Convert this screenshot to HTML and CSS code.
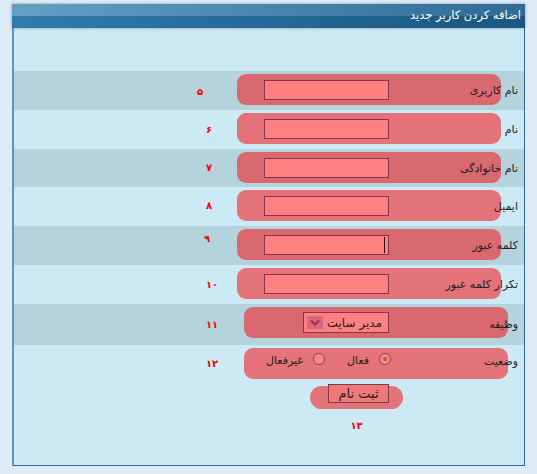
FILE: index.html
```html
<!DOCTYPE html>
<html lang="fa">
<head>
<meta charset="utf-8">
<title>اضافه کردن کاربر جدید</title>
<link rel="stylesheet" href="styles.css">
</head>
<body>
<div class="panel">
  <div class="head">اضافه کردن کاربر جدید</div>
  <div class="body">
    <div class="spacer"></div>

    <div class="row dark">
      <div class="label">نام کاربری</div>
      <div class="box"><input class="field" type="text"></div>
      <div class="num n5">۵</div>
    </div>

    <div class="row">
      <div class="label">نام</div>
      <div class="box"><input class="field" type="text"></div>
      <div class="num">۶</div>
    </div>

    <div class="row dark short">
      <div class="label">نام خانوادگی</div>
      <div class="box"><input class="field" type="text"></div>
      <div class="num">۷</div>
    </div>

    <div class="row">
      <div class="label">ایمیل</div>
      <div class="box"><input class="field" type="text"></div>
      <div class="num n8">۸</div>
    </div>

    <div class="row dark">
      <div class="label">کلمه عبور</div>
      <div class="box"><span class="caret-wrap"><input class="field field-plain" type="password"></span></div>
      <div class="num n9">۹</div>
    </div>

    <div class="row">
      <div class="label">تکرار کلمه عبور</div>
      <div class="box"><input class="field" type="password"></div>
      <div class="num">۱۰</div>
    </div>

    <div class="row dark wide tall">
      <div class="label">وظیفه</div>
      <div class="box">
        <div class="select">
          <span class="select-text">مدیر سایت</span>
          <span class="select-arrow">
            <svg width="10" height="7" viewBox="0 0 10 7"><path d="M1 1.5 L5 5.5 L9 1.5" fill="none" stroke="#9b2f4a" stroke-width="2"/></svg>
          </span>
        </div>
      </div>
      <div class="num">۱۱</div>
    </div>

    <div class="row wide short">
      <div class="label label-top">وضعیت</div>
      <div class="box box-radios">
        <span class="radio checked"></span>
        <span class="radio-label">فعال</span>
        <span class="radio second"></span>
        <span class="radio-label">غیرفعال</span>
      </div>
      <div class="num">۱۲</div>
    </div>

    <div class="submit-area">
      <div class="btn-box"><button class="btn" type="button">ثبت نام</button></div>
      <div class="num-bottom">۱۳</div>
    </div>
  </div>
</div>
</body>
</html>
```

FILE: styles.css
```css
html, body {
  margin: 0;
  padding: 0;
}

body {
  background: #dfecf7;
  font-family: "DejaVu Sans", "Noto Sans", sans-serif;
  color: #1a1a1a;
}

.panel {
  margin: 4px 0 0 12px;
  width: 513px;
}

.head {
  height: 24px;
  line-height: 23px;
  direction: rtl;
  padding-right: 4px;
  color: #ffffff;
  font-size: 11.5px;
  background:
    linear-gradient(to right, #63a0c6, #2e6c96) top / 100% 12px no-repeat,
    linear-gradient(to right, #2f7cae, #1a5680);
  box-shadow: 0 0 3px rgba(0, 0, 0, 0.35);
  position: relative;
  z-index: 1;
}

.body {
  direction: rtl;
  background: #cceaf5;
  border-left: 2px solid #5d96c0;
  border-right: 1px solid #2b6a98;
  border-bottom: 1px solid #2b6a98;
  height: 438px;
  box-sizing: border-box;
}

.spacer {
  height: 43px;
}

.row {
  display: grid;
  grid-template-columns: 23px 264px 1fr;
  grid-template-rows: 39px;
  align-items: start;
}

.row.short {
  grid-template-rows: 38px;
}

.row.tall {
  grid-template-rows: 41px;
}

.row.wide {
  grid-template-columns: 16px 264px 1fr;
}

.row.dark {
  background: #b5d3dd;
}

.label {
  grid-column: 1 / 3;
  grid-row: 1;
  justify-self: start;
  align-self: center;
  padding-right: 6px;
  font-size: 11px;
  line-height: 14px;
  color: #1c1c1c;
  position: relative;
  z-index: 1;
  margin-top: 1px;
}

.label-top {
  align-self: start;
  margin-top: 10px;
}

.box {
  grid-column: 2;
  grid-row: 1;
  height: 31px;
  margin-top: 3px;
  border-radius: 9px;
  background: rgba(241, 34, 38, 0.6);
  display: flex;
  align-items: center;
}

.field {
  margin: 0 112px 0 0;
  width: 125px;
  height: 20px;
  box-sizing: border-box;
  border: 1px solid #8c3050;
  background: #ff8080;
  padding: 0;
  outline: none;
  display: block;
}

.field.field-plain {
  margin: 0;
}

.caret-wrap {
  position: relative;
  display: block;
  margin-right: 112px;
}

.caret-wrap::after {
  content: "";
  position: absolute;
  right: 4px;
  top: 2px;
  width: 1px;
  height: 16px;
  background: #1a0000;
}

.num {
  grid-column: 3;
  grid-row: 1;
  justify-self: left;
  align-self: center;
  margin-left: 192px;
  color: #ff0000;
  font-weight: bold;
  font-size: 10px;
  line-height: 12px;
  direction: ltr;
}

.num.n5 {
  margin-left: 183px;
  margin-top: 2px;
}

.num.n8 {
  margin-top: -2px;
}

.num.n9 {
  align-self: start;
  margin-top: 7px;
  margin-left: 190px;
}

.select {
  margin-right: 119px;
  width: 86px;
  height: 21px;
  box-sizing: border-box;
  border: 1px solid #8c3050;
  background: #ff8080;
  display: flex;
  align-items: center;
}

.select-text {
  padding-right: 6px;
  font-size: 12px;
  line-height: 16px;
  white-space: nowrap;
  flex-shrink: 0;
  color: #2a1a1a;
}

.select-arrow {
  margin-right: auto;
  margin-left: 3px;
  width: 16px;
  height: 13px;
  flex-shrink: 0;
  background: #d86680;
  display: flex;
  align-items: center;
  justify-content: center;
}

.box-radios {
  align-items: flex-start;
  padding-top: 5px;
  box-sizing: border-box;
}

.radio {
  width: 12px;
  height: 12px;
  box-sizing: border-box;
  border-radius: 50%;
  border: 1px solid #9a3a50;
  background: #f58a8a;
  margin-right: 117px;
  display: flex;
  align-items: center;
  justify-content: center;
}

.radio.second {
  margin-right: 22px;
}

.radio.checked::after {
  content: "";
  width: 4px;
  height: 4px;
  border-radius: 50%;
  background: #b0602a;
}

.radio-label {
  margin-right: 10px;
  margin-top: 1px;
  font-size: 11px;
  line-height: 14px;
  color: #2a1a1a;
}

.submit-area {
  display: flex;
  flex-direction: column;
  align-items: flex-start;
  padding-right: 121px;
  margin-top: 3px;
}

.btn-box {
  width: 93px;
  height: 23px;
  border-radius: 12px;
  background: rgba(241, 34, 38, 0.6);
  display: flex;
  align-items: flex-start;
}

.btn {
  margin: -2px 14px 0 0;
  width: 61px;
  height: 19px;
  box-sizing: border-box;
  border: 1px solid #7a3c44;
  background: #f07878;
  padding: 0;
  font-family: "DejaVu Sans", sans-serif;
  font-size: 13px;
  line-height: 16px;
  color: #2a1a1a;
}

.num-bottom {
  width: 93px;
  text-align: center;
  margin-top: 11px;
  color: #ff0000;
  font-weight: bold;
  font-size: 10px;
  line-height: 12px;
  direction: ltr;
}
```
